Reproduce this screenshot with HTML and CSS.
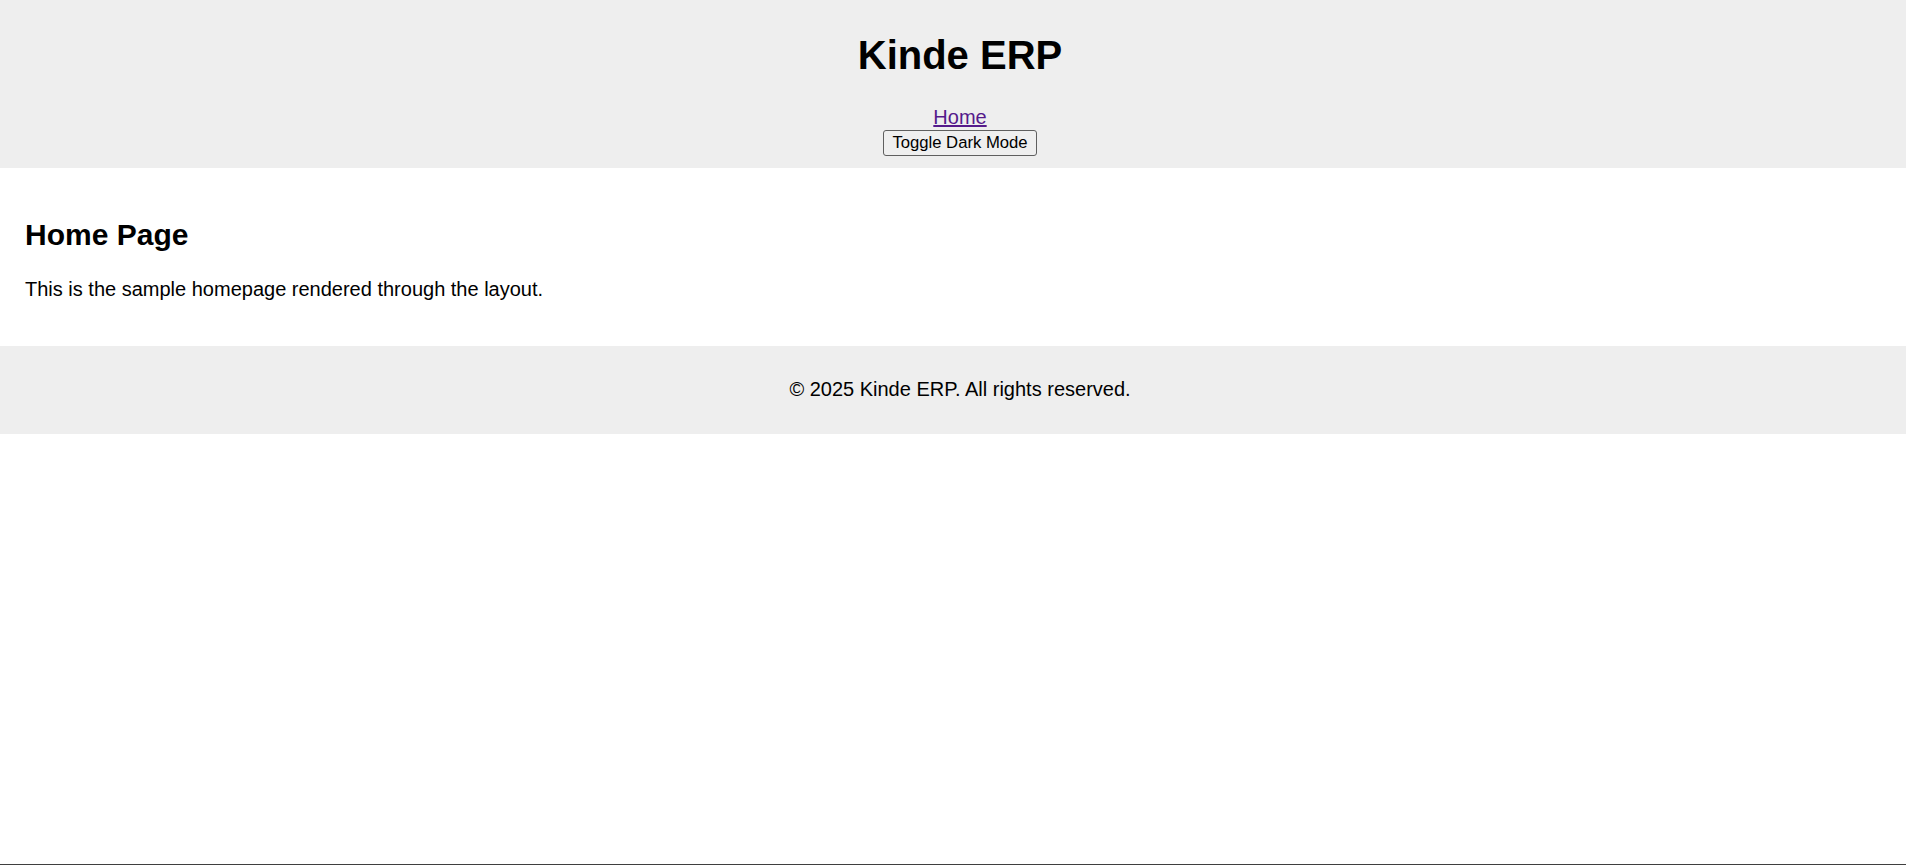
FILE: index.html
```html
<!DOCTYPE html>
<html lang="en">
<head>
<meta charset="utf-8">
<title>Kinde ERP</title>
<link rel="stylesheet" href="styles.css">
</head>
<body>
<header class="site-header">
  <h1 class="site-title">Kinde ERP</h1>
  <nav class="site-nav">
    <a class="nav-link" href="#">Home</a>
    <button class="theme-toggle" type="button">Toggle Dark Mode</button>
  </nav>
</header>
<main class="content">
  <h2 class="page-title">Home Page</h2>
  <p class="page-text">This is the sample homepage rendered through the layout.</p>
</main>
<footer class="site-footer">
  <p class="footer-text">© 2025 Kinde ERP. All rights reserved.</p>
</footer>
</body>
</html>
```

FILE: styles.css
```css
html, body {
  margin: 0;
  padding: 0;
}
body {
  font-family: "Liberation Sans", Arial, sans-serif;
  font-size: 20px;
  color: #000;
  background: #fff;
  min-height: 100vh;
  box-sizing: border-box;
  border-bottom: 1px solid #3f3f3f;
}
.site-header {
  background: #eeeeee;
  text-align: center;
  padding: 12.5px 0 12px 14px;
}
.site-title {
  font-size: 40px;
  line-height: 46px;
  font-weight: bold;
  margin: 19.5px 0 27.5px;
}
.site-nav {
  display: flex;
  flex-direction: column;
  align-items: center;
}
.nav-link {
  color: #551a8b;
  font-size: 20px;
  line-height: 23px;
  text-decoration: underline;
}
.theme-toggle {
  margin-top: 1px;
  font-family: "Liberation Sans", Arial, sans-serif;
  font-size: 16.67px;
  line-height: 19.5px;
  padding: 2.5px 8.5px;
  color: #000;
  background: #efefef;
  border: 1px solid #5f5f5f;
  border-radius: 3px;
}
.content {
  padding: 25px;
}
.page-title {
  font-size: 30px;
  line-height: 34.5px;
  font-weight: bold;
  margin: 25px 0;
}
.page-text {
  font-size: 20px;
  line-height: 23px;
  margin: 20px 0;
}
.site-footer {
  background: #eeeeee;
  text-align: center;
  padding: 12.5px 0 12.5px 14px;
}
.footer-text {
  font-size: 20px;
  line-height: 23px;
  margin: 20px 0;
}
```
